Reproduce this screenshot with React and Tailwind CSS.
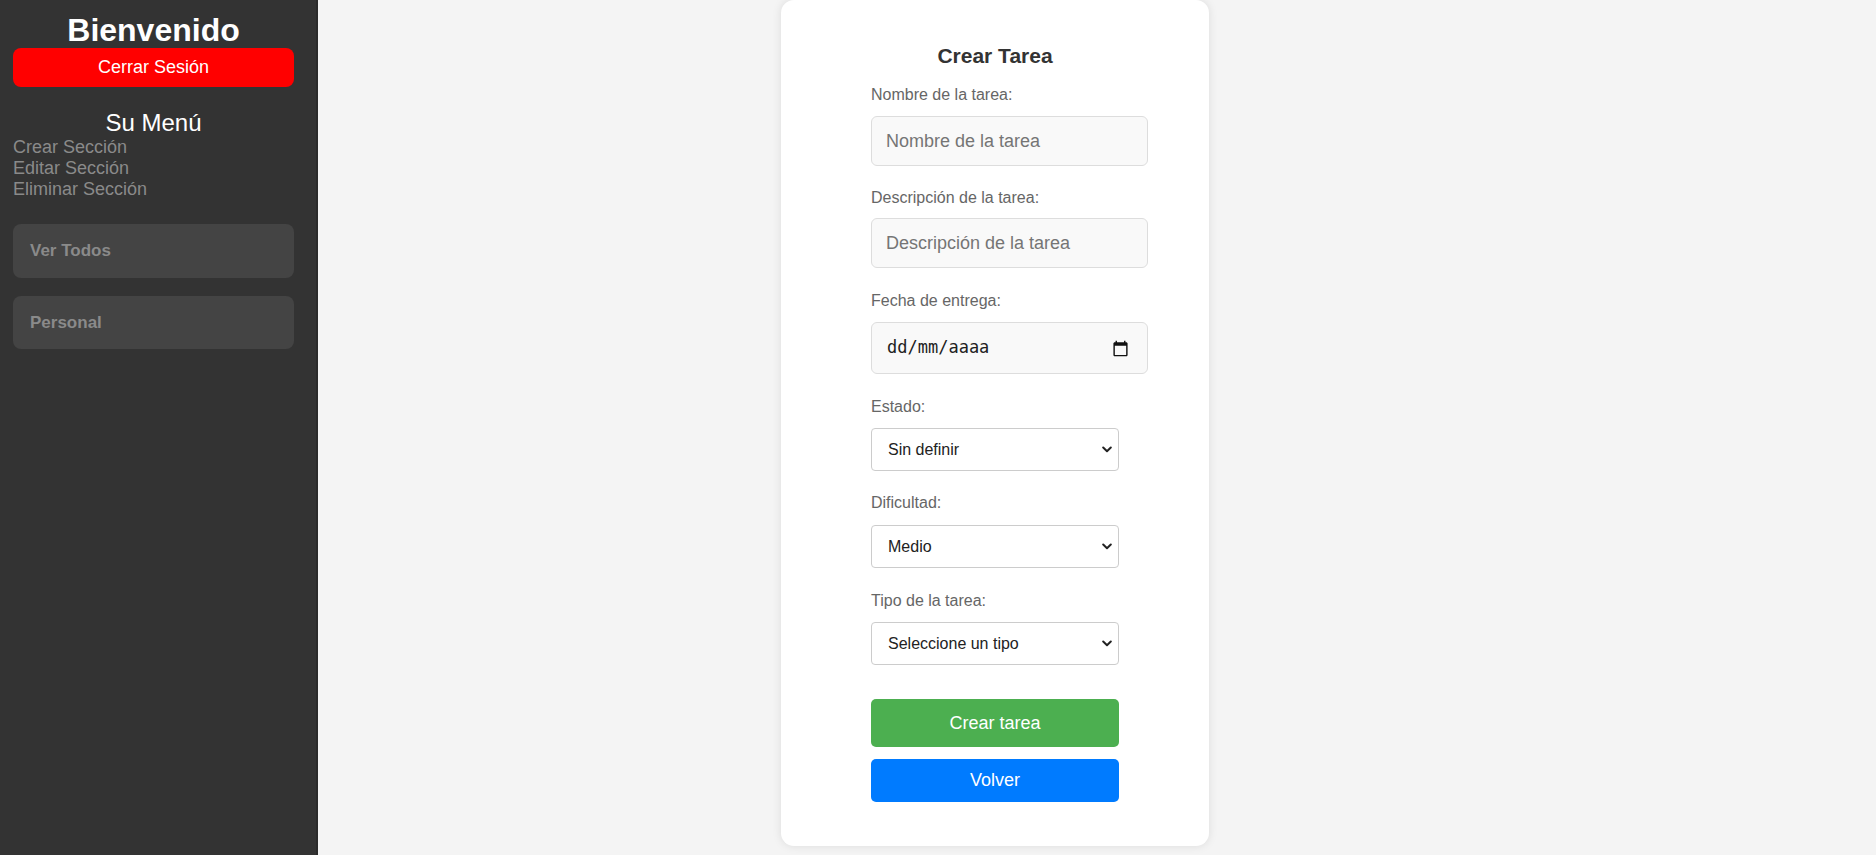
export default function App() {
  const menu = ["Crear Sección", "Editar Sección", "Eliminar Sección"];

  const Select = ({ value, mt }) => (
    <div
      className={`${mt} w-[248px] h-[43px] flex items-center justify-between pl-[16px] pr-[6px] bg-white border border-[#ccc] rounded-[4px] text-[16px] text-[#222]`}
    >
      <span>{value}</span>
      <svg width="10" height="7" viewBox="0 0 10 7" fill="none">
        <path d="M1.2 1.5 5 5.2l3.8-3.7" stroke="#222" strokeWidth="2" strokeLinecap="round" strokeLinejoin="round" />
      </svg>
    </div>
  );

  const Label = ({ children, mt }) => (
    <label className={`${mt} block h-[17px] leading-[17px] text-[16px] text-[#666]`}>{children}</label>
  );

  return (
    <div className="flex h-[855px] bg-[#f4f4f4] font-['Liberation_Sans',Arial,sans-serif] overflow-hidden">
      {/* sidebar */}
      <aside className="w-[318px] shrink-0 bg-[#333] border-r-2 border-[#2b2b2b] pl-[13px] pr-[22px] pt-[13px]">
        <h1 className="text-center text-[32px] leading-[35px] font-bold text-white">Bienvenido</h1>
        <button className="w-full h-[39px] bg-[#ff0000] text-white text-[18px] rounded-[8px]">
          Cerrar Sesión
        </button>
        <h2 className="mt-[22px] text-center text-[24px] leading-[28px] text-white">Su Menú</h2>
        <ul>
          {menu.map(m => (
            <li key={m} className="text-[18px] leading-[21px] text-[#8a8a8a]">{m}</li>
          ))}
        </ul>
        <div className="mt-[24px] h-[54px] flex items-center px-[17px] bg-[#444] rounded-[8px] text-[17px] font-bold text-[#8a8a8a]">
          Ver Todos
        </div>
        <div className="mt-[18px] h-[53px] flex items-center px-[17px] bg-[#444] rounded-[8px] text-[17px] font-bold text-[#8a8a8a]">
          Personal
        </div>
      </aside>

      {/* main */}
      <main className="flex-1">
        <div className="ml-[463px] w-[428px] bg-white rounded-[13px] shadow-[0_0_10px_rgba(0,0,0,0.1)] pt-[44px] pb-[44px]">
          <h2 className="text-center text-[21px] leading-[23px] font-bold text-[#333]">Crear Tarea</h2>
          <form className="w-[248px] mx-auto flex flex-col items-start">
            <Label mt="mt-[19px]">Nombre de la tarea:</Label>
            <input
              className="mt-[13px] w-[277px] h-[50px] px-[14px] bg-[#f9f9f9] border border-[#ddd] rounded-[6px] text-[18px] placeholder:text-[#757575] outline-none"
              placeholder="Nombre de la tarea"
            />
            <Label mt="mt-[23px]">Descripción de la tarea:</Label>
            <input
              className="mt-[12px] w-[277px] h-[50px] px-[14px] bg-[#f9f9f9] border border-[#ddd] rounded-[6px] text-[18px] placeholder:text-[#757575] outline-none"
              placeholder="Descripción de la tarea"
            />
            <Label mt="mt-[24px]">Fecha de entrega:</Label>
            <div className="mt-[13px] w-[277px] h-[52px] flex items-center justify-between pl-[15px] pr-[18px] bg-[#f9f9f9] border border-[#ddd] rounded-[6px]">
              <span className="font-['DejaVu_Sans_Mono',monospace] text-[17px] text-[#222]">dd/mm/aaaa</span>
              <svg width="17" height="17" viewBox="0 0 24 24" fill="#111">
                <path d="M20 3h-1V1h-2v2H7V1H5v2H4c-1.1 0-2 .9-2 2v16c0 1.1.9 2 2 2h16c1.1 0 2-.9 2-2V5c0-1.1-.9-2-2-2zm0 18H4V8h16v13z" />
              </svg>
            </div>
            <Label mt="mt-[24px]">Estado:</Label>
            <Select mt="mt-[13px]" value="Sin definir" />
            <Label mt="mt-[23px]">Dificultad:</Label>
            <Select mt="mt-[14px]" value="Medio" />
            <Label mt="mt-[24px]">Tipo de la tarea:</Label>
            <Select mt="mt-[13px]" value="Seleccione un tipo" />
            <button
              type="button"
              className="mt-[34px] w-[248px] h-[48px] bg-[#4caf50] text-white text-[18px] rounded-[5px]"
            >
              Crear tarea
            </button>
            <button
              type="button"
              className="mt-[12px] w-[248px] h-[43px] bg-[#007bff] text-white text-[18px] rounded-[5px]"
            >
              Volver
            </button>
          </form>
        </div>
      </main>
    </div>
  );
}
